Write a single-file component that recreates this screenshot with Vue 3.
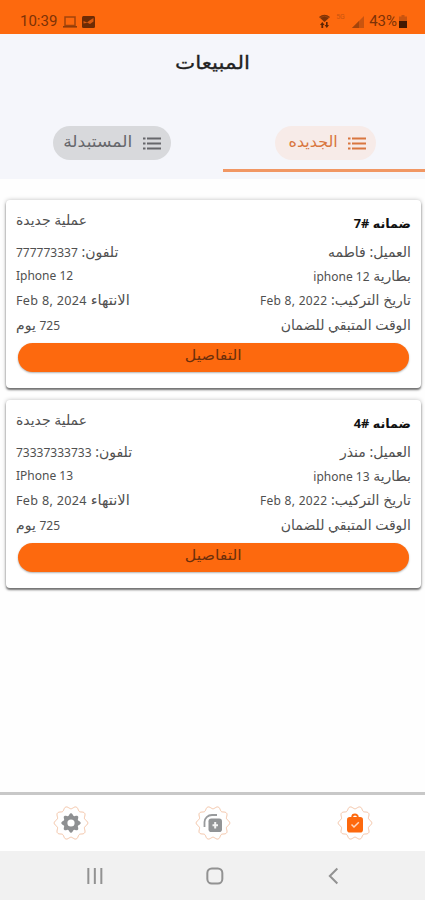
<template>
  <div class="screen" dir="rtl">
    <div class="status" dir="ltr">
      <div class="status-left">
        <span class="clock">10:39</span>
        <svg class="laptop" width="14" height="12" viewBox="0 0 14 12">
          <rect x="2" y="1" width="10" height="8.500" fill="none" stroke="#a3440b" stroke-width="1.500" />
          <path d="M0 10.800h14" stroke="#913c0a" stroke-width="1.600" />
        </svg>
        <svg width="13" height="12" viewBox="0 0 13 12">
          <rect width="13" height="12" rx="1.500" fill="#6d2b05" />
          <path d="M1.500 7.500V5L5 6.500 7.500 4.500 11.500 2v3.500L8 8 5.500 6.800z" fill="#d9590f" />
        </svg>
      </div>
      <div class="status-right">
        <svg class="wifi" width="11" height="14" viewBox="0 0 11 14">
          <path d="M0 3Q5.500-1.500 11 3L5.500 8z" fill="#7c3207" />
          <path d="M1 3.600q4.500-3 9 0" fill="none" stroke="#b04a0b" stroke-width=".7" />
          <path d="M1 11l2.300-3 2.300 3H4.200v3H2.400v-3zM5.600 11H7V8h1.600v3H10l-2.200 3z" fill="#5d2404" />
        </svg>
        <span class="net">5G</span>
        <svg class="signal" width="12" height="12" viewBox="0 0 12 12">
          <path d="M0 12L12 0v12z" fill="#c9540f" />
          <path d="M0 12L7 5v7z" fill="#a3440b" />
        </svg>
        <span class="percent">43%</span>
        <svg width="8" height="13" viewBox="0 0 8 13">
          <path d="M2.500 0h3v1.500H8V6H0V1.500h2.500z" fill="#c9540f" />
          <path d="M0 6h8v7H0z" fill="#431902" />
        </svg>
      </div>
    </div>

    <header class="header">
      <h1>المبيعات</h1>
      <div class="tabs">
        <div v-for="tab in tabs" :key="tab.label" class="tab" :class="{ active: tab.active }">
          <div class="chip">
            <svg width="18" height="13" viewBox="0 0 18 13" fill="none" stroke="currentColor" stroke-width="2">
              <path d="M0 1.500h2.500M4 1.500h14M0 6.500h2.500M4 6.500h14M0 11.500h2.500M4 11.500h14" />
            </svg>
            <span>{{ tab.label }}</span>
          </div>
        </div>
      </div>
    </header>

    <main class="list">
      <article v-for="sale in sales" :key="sale.id" class="card">
        <div class="row head">
          <strong>ضمانه #{{ sale.id }}</strong>
          <span>عملية جديدة</span>
        </div>
        <div class="row">
          <span>العميل: {{ sale.client }}</span>
          <span>تلفون: <bdi class="latin">{{ sale.phone }}</bdi></span>
        </div>
        <div class="row">
          <span>بطارية <bdi class="latin">{{ sale.battery }}</bdi></span>
          <bdi class="latin">{{ sale.model }}</bdi>
        </div>
        <div class="row">
          <span>تاريخ التركيب: <bdi class="latin date">{{ sale.installed }}</bdi></span>
          <span class="expires">الانتهاء <bdi class="latin date">{{ sale.expires }}</bdi></span>
        </div>
        <div class="row">
          <span>الوقت المتبقي للضمان</span>
          <span><bdi class="latin">725</bdi> يوم</span>
        </div>
        <button class="details"><span>التفاصيل</span></button>
      </article>
    </main>

    <nav class="nav">
      <div v-for="item in ['bag', 'add', 'gear']" :key="item" class="nav-item">
        <svg width="36" height="36" viewBox="-18 -18 36 36">
          <path :d="badge" fill="none" stroke="#f4c3a5" stroke-width="1" />
          <g v-if="item === 'bag'">
            <rect x="-8" y="-6" width="16" height="15.500" rx="2.800" fill="#fd690e" />
            <path d="M-2.800-5.500v-.5a2.800 2.500 0 0 1 5.600 0v.5" fill="none" stroke="#fd690e" stroke-width="1.800" />
            <path d="M-3.500 1.500l2.500 2.500 4.800-4.800" fill="none" stroke="#ffd9c2" stroke-width="1.500" />
          </g>
          <g v-else-if="item === 'add'">
            <path d="M-8.500 4v-5a7.500 7 0 0 1 7.500-7H4" fill="none" stroke="#999b9d" stroke-width="1.800" />
            <rect x="-4.500" y="-4.500" width="13.500" height="13.500" rx="2.800" fill="#929496" />
            <path d="M2.200-1v6.500M-.5 2.200h5.500" stroke="#f4f4f4" stroke-width="2" />
          </g>
          <path v-else :d="gear" fill="#8e9092" fill-rule="evenodd" />
        </svg>
      </div>
    </nav>

    <div class="system" dir="ltr">
      <svg width="18" height="18" viewBox="0 0 18 18" fill="none" stroke="#929292" stroke-width="2">
        <path d="M2.500 1v16M9 1v16M15.500 1v16" />
      </svg>
      <svg width="18" height="18" viewBox="0 0 18 18" fill="none" stroke="#929292" stroke-width="2">
        <rect x="1.500" y="1.500" width="15" height="15" rx="4.500" />
      </svg>
      <svg width="18" height="18" viewBox="0 0 18 18" fill="none" stroke="#929292" stroke-width="2">
        <path d="M12.500 1.500L5 9l7.500 7.500" />
      </svg>
    </div>
  </div>
</template>

<script setup>
const tabs = [
  { label: 'الجديده', active: true },
  { label: 'المستبدلة', active: false }
]

const sales = [
  {
    id: 7,
    client: 'فاطمه',
    phone: '777773337',
    battery: 'iphone 12',
    model: 'Iphone 12',
    installed: 'Feb 8, 2022',
    expires: 'Feb 8, 2024'
  },
  {
    id: 4,
    client: 'منذر',
    phone: '73337333733',
    battery: 'iphone 13',
    model: 'IPhone 13',
    installed: 'Feb 8, 2022',
    expires: 'Feb 8, 2024'
  }
]

// closed wavy ring: radius, wave height, number of lobes
const wave = (radius, height, lobes) => {
  const points = []
  for (let i = 0; i < 160; i++) {
    const a = (i / 160) * Math.PI * 2
    const r = radius + height * Math.cos(a * lobes)
    points.push(`${(r * Math.cos(a)).toFixed(2)} ${(r * Math.sin(a)).toFixed(2)}`)
  }
  return 'M' + points.join('L') + 'Z'
}

const badge = wave(15.5, 1.3, 10)
const gear = wave(8.6, 1.1, 8) + 'M3.6 0A3.6 3.6 0 1 0-3.6 0A3.6 3.6 0 1 0 3.6 0Z'
</script>

<style>
body {
  margin: 0;
  background: #fff;
}
</style>

<style scoped>
.screen {
  width: 425px;
  height: 900px;
  display: flex;
  flex-direction: column;
  overflow: hidden;
  background: #fefefe;
  font-family: "Noto Sans", "DejaVu Sans", sans-serif;
  color: #505050;
}

.status {
  height: 34px;
  box-sizing: border-box;
  padding: 9px 18px 0 20px;
  display: flex;
  justify-content: space-between;
  background: #fd690e;
  color: #7c3207;
  font-family: Roboto, sans-serif;
  font-size: 15px;
  line-height: 25px;
}

.status-left,
.status-right {
  height: 25px;
  display: flex;
  align-items: center;
}

.laptop {
  margin: 0 5px 0 6px;
}

.wifi {
  margin-top: -2px;
}

.net {
  width: 13px;
  margin-left: 6px;
  font-size: 7px;
  line-height: 16px;
  align-self: flex-start;
  color: #c9540f;
}

.signal {
  margin: 0 5px 0 3px;
}

.percent {
  margin-right: 2px;
}

.header {
  height: 145px;
  display: flex;
  flex-direction: column;
  justify-content: space-between;
  background: #f5f6fb;
}

h1 {
  margin: 14px 0 0;
  text-align: center;
  font-size: 18.5px;
  font-weight: 400;
  line-height: 28px;
  color: #222;
  transform: scaleX(1.16);
  -webkit-text-stroke: 0.3px #222;
}

.tabs {
  height: 53px;
  display: flex;
}

.tab {
  width: 202px;
  height: 43px;
  display: flex;
  justify-content: center;
  border-bottom: 3px solid transparent;
}

.tab:last-child {
  width: 223px;
}

.tab.active {
  border-color: #f19764;
}

.chip {
  width: 118px;
  height: 34px;
  box-sizing: border-box;
  padding: 0 10px;
  display: flex;
  align-items: center;
  gap: 10px;
  border-radius: 17px;
  background: #d8d9dc;
  color: #66676b;
  font-size: 15.5px;
  white-space: nowrap;
}

.chip span {
  margin-bottom: 5px;
  transform: scaleX(1.11);
  transform-origin: right;
}

.active .chip {
  width: 101px;
  margin-left: 3px;
  background: #f7ebe8;
  color: #d9763f;
}

.active .chip span {
  transform: scaleX(1.03);
}

.list {
  flex: 1;
  padding: 21px 4px 0 6px;
  display: flex;
  flex-direction: column;
  gap: 12px;
}

.card {
  height: 188px;
  box-sizing: border-box;
  padding: 8px 10px 0;
  border-radius: 4px;
  background: #fff;
  box-shadow: 0 2px 2px rgba(0, 0, 0, 0.5), 0 0 4px rgba(0, 0, 0, 0.25);
}

.row {
  height: 24.3px;
  display: flex;
  align-items: center;
  justify-content: space-between;
  font-size: 14px;
  line-height: 26px;
  white-space: nowrap;
}

.latin {
  font-size: 12px;
}

.date {
  letter-spacing: 0.3px;
}

.expires {
  transform: scaleX(1.05);
  transform-origin: left;
}

.head {
  height: 32px;
  align-items: flex-start;
  line-height: 24px;
}

.head strong {
  font-size: 12.8px;
  line-height: 30px;
  color: #111;
}

.details {
  display: block;
  width: 391px;
  height: 29px;
  margin: 6px 2px 0;
  padding: 0 0 6px;
  border: 0;
  border-radius: 15px;
  background: #fd690e;
  box-shadow: 0 1px 2px rgba(0, 0, 0, 0.3);
  color: #6b2f0c;
  font-family: inherit;
  font-size: 14px;
  line-height: 22px;
}

.details span {
  display: inline-block;
  transform: scaleX(1.13);
}

.nav {
  height: 59px;
  box-sizing: border-box;
  border-top: 3px solid #c8c8c8;
  display: flex;
  justify-content: center;
  background: #fff;
}

.nav-item {
  flex: 0 0 142px;
  display: flex;
  align-items: center;
  justify-content: center;
}

.system {
  height: 49px;
  padding: 0 31px 0 35px;
  display: flex;
  align-items: center;
  background: #f1f1f1;
}

.system svg {
  flex: 1;
}
</style>
